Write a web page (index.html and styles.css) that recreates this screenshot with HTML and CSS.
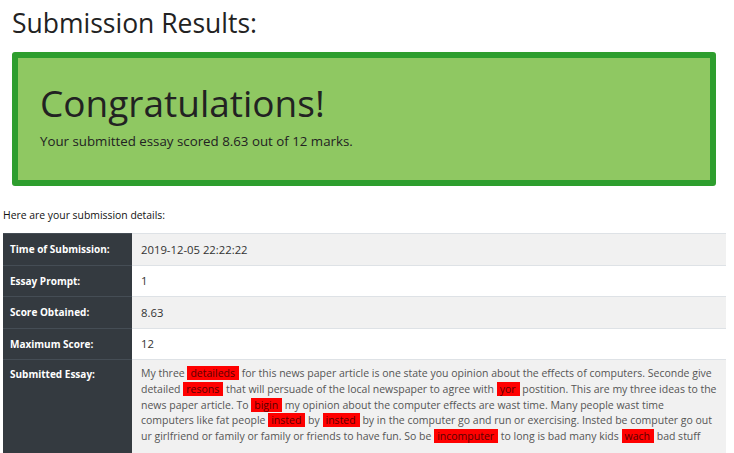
FILE: index.html
```html
<!DOCTYPE html>
<html>
<head>
<meta charset="utf-8">
<link rel="stylesheet" href="styles.css">
</head>
<body>
<h1 class="title">Submission Results:</h1>
<div class="alert">
  <h2 class="alert-heading">Congratulations!</h2>
  <p class="alert-text">Your submitted essay scored 8.63 out of 12 marks.</p>
</div>
<p class="intro">Here are your submission details:</p>
<table class="details">
  <colgroup><col class="col-label"><col class="col-value"></colgroup>
  <tr class="striped"><th>Time of Submission:</th><td>2019-12-05 22:22:22</td></tr>
  <tr><th>Essay Prompt:</th><td>1</td></tr>
  <tr class="striped"><th>Score Obtained:</th><td>8.63</td></tr>
  <tr><th>Maximum Score:</th><td>12</td></tr>
  <tr class="striped"><th>Submitted Essay:</th><td class="essay">My three <span class="err">detaileds</span> for this news paper article is one state you opinion about the effects of computers. Seconde give<br>detailed <span class="err">resons</span> that will persuade of the local newspaper to agree with <span class="err">yor</span> postition. This are my three ideas to the<br>news paper article. To <span class="err">bigin</span> my opinion about the computer effects are wast time. Many people wast time<br>computers like fat people <span class="err">insted</span> by <span class="err">insted</span> by in the computer go and run or exercising. Insted be computer go out<br>ur girlfriend or family or family or friends to have fun. So be <span class="err">incomputer</span> to long is bad many kids <span class="err">wach</span> bad stuff</td></tr>
</table>
</body>
</html>
```
FILE: styles.css
```css
html, body {
  margin: 0;
  padding: 0;
  background: #fff;
  font-family: "Open Sans", "DejaVu Sans", sans-serif;
  color: #212529;
  overflow: hidden;
}
.title {
  margin: 6px 0 0 12px;
  font-size: 26.5px;
  font-weight: 400;
  line-height: 34px;
  color: #222;
}
.alert {
  margin: 12px 0 0 12px;
  width: 670px;
  height: 122px;
  border: 6px solid #2e9e2e;
  border-radius: 3px;
  background: #8fc862;
  padding: 0 0 0 22px;
}
.alert-heading {
  margin: 22px 0 0 0;
  font-size: 37px;
  font-weight: 400;
  line-height: 46px;
  color: #222;
}
.alert-text {
  margin: 6px 0 0 0;
  font-size: 13.3px;
  line-height: 18px;
  color: #222;
}
.intro {
  margin: 20px 0 0 3px;
  font-size: 10.4px;
  line-height: 18px;
  color: #111;
}
.details {
  margin: 9px 0 0 3px;
  width: 723px;
  border-collapse: collapse;
  table-layout: fixed;
}
.col-label {
  width: 129px;
}
.details th {
  background: #343a40;
  color: #fff;
  text-align: left;
  font-weight: 700;
  font-size: 10px;
  white-space: nowrap;
  padding: 0 7px;
  height: 30.5px;
  border-top: 1px solid #454d55;
  vertical-align: middle;
}
.details td {
  padding: 0 9px;
  height: 30.5px;
  border-top: 1px solid #dee2e6;
  color: #333;
  font-size: 11.3px;
  vertical-align: middle;
}
.details tr.striped td {
  background: #f1f1f1;
}
.details td.essay {
  vertical-align: top;
  padding: 6px 4px 20px 9px;
  line-height: 15.8px;
  font-size: 10.5px;
  white-space: nowrap;
  color: #555;
}
.details tr:last-child th {
  vertical-align: top;
  padding-top: 7px;
}
.err {
  background: #ff0000;
  color: #5a0000;
  padding: 0 4px 0 3px;
}
```
